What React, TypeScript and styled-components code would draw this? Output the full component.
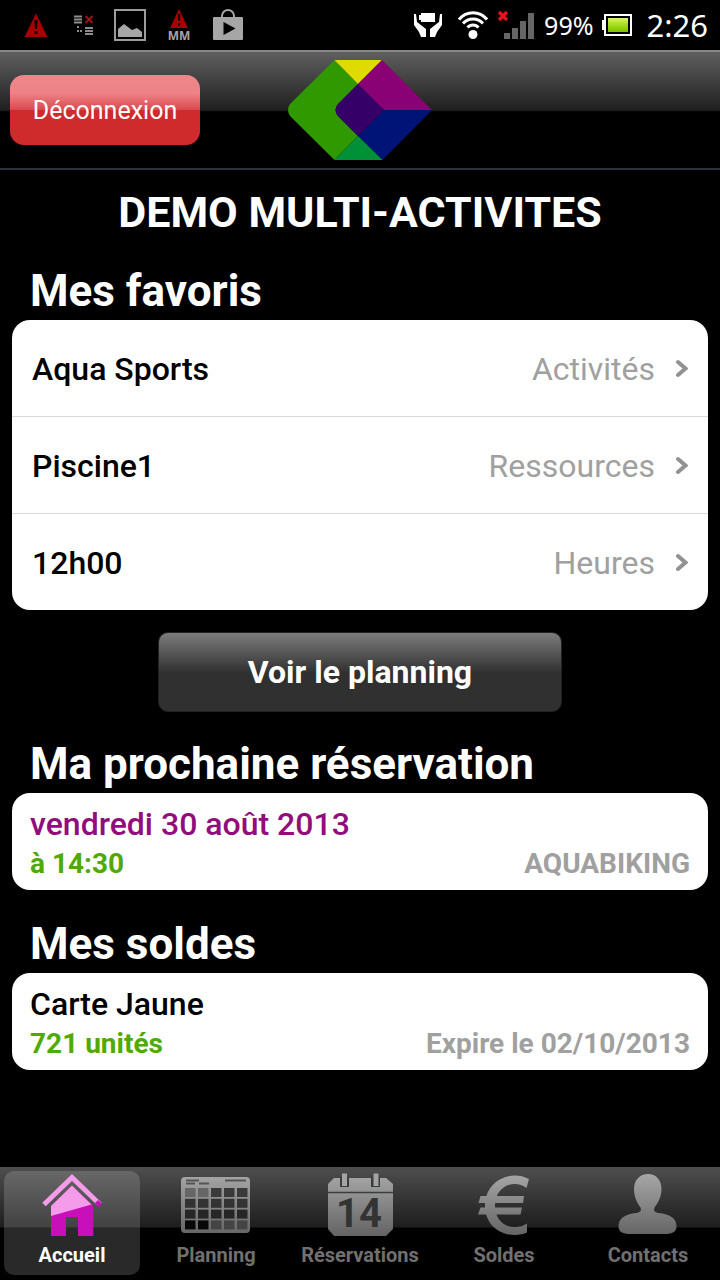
import React from "react";
import styled, { createGlobalStyle } from "styled-components";

const GlobalStyle = createGlobalStyle`
  *, *::before, *::after { box-sizing: border-box; }
  body { margin: 0; background: #000; font-family: Roboto, "Liberation Sans", sans-serif; }
  h1, h2, p, ul { margin: 0; padding: 0; }
  svg { display: block; flex: none; }
`;

const Screen = styled.div`
  display: flex;
  flex-direction: column;
  min-height: 100vh;
  background: #000;
  color: #fff;
`;

const StatusBar = styled.div`
  display: flex;
  align-items: center;
  justify-content: space-between;
  height: 50px;
  padding: 0 12px 0 24px;
  font-family: "Noto Sans", sans-serif;
`;

const StatusIcons = styled.div<{ $gap: number }>`
  display: flex;
  align-items: center;
  gap: ${(p) => p.$gap}px;
`;

const StatusText = styled.span<{ $size: number }>`
  font-size: ${(p) => p.$size}px;
  line-height: 48px;
`;

const Header = styled.header`
  display: grid;
  grid-template-columns: 1fr auto 1fr;
  align-items: center;
  height: 120px;
  padding: 0 10px;
  border-top: 2px solid #888;
  border-bottom: 2px solid #29323b;
  background: linear-gradient(#5f5f5f 0, #202020 58px, #000 60px);
`;

const LogoutButton = styled.button`
  justify-self: start;
  width: 190px;
  height: 70px;
  padding: 2px 0 0;
  border: 0;
  border-radius: 14px;
  background: linear-gradient(#f0868a 0, #ee8387 18px, #d9494d 35px, #cf2b2c 35px);
  color: #fff;
  font: 400 25px/68px Roboto, sans-serif;
`;

const Main = styled.main`
  flex: 1;
  padding: 12px 12px 24px;
`;

const Title = styled.h1`
  font-size: 43px;
  line-height: 60px;
  font-weight: 700;
  text-align: center;
`;

const Section = styled.section<{ $gap: number }>`
  margin-top: ${(p) => p.$gap}px;
`;

const SectionTitle = styled.h2`
  padding-left: 18px;
  font-size: 44px;
  line-height: 58px;
  font-weight: 700;
`;

const Card = styled.div`
  border-radius: 18px;
  background: #fff;
  color: #000;
  overflow: hidden;
`;

const FavoriteList = styled(Card).attrs({ as: "ul" })`
  list-style: none;
`;

const FavoriteItem = styled.li`
  & + & { border-top: 1px solid #d9d9d9; }
`;

const FavoriteLink = styled.a`
  display: flex;
  align-items: center;
  height: 96px;
  padding: 1px 20px 0;
  color: #000;
  font-size: 32px;
  text-decoration: none;
`;

const FavoriteName = styled.span`
  flex: 1;
  font-weight: 500;
`;

const FavoriteKind = styled.span`
  margin-right: 20px;
  color: #a0a0a0;
`;

const PlanningButton = styled.button`
  display: block;
  width: 58%;
  height: 80px;
  margin: 22px auto 0;
  padding: 0;
  border: 1px solid #222;
  border-radius: 10px;
  background: linear-gradient(#7c7c7c 0, #303030 40px, #303030 100%);
  color: #fff;
  font: 700 32px/78px Roboto, sans-serif;
`;

const InfoCard = styled(Card)`
  padding: 11px 18px 6px;
`;

const InfoTitle = styled.p<{ $color: string }>`
  color: ${(p) => p.$color};
  font-size: 32px;
  line-height: 40px;
  font-weight: 500;
`;

const InfoRow = styled.p`
  display: flex;
  justify-content: space-between;
  font-size: 28px;
  line-height: 40px;
  font-weight: 700;
`;

const Highlight = styled.span`
  color: #50aa05;
`;

const Detail = styled.span`
  color: #a0a0a0;
`;

const TabBar = styled.nav`
  display: flex;
  height: 113px;
  background: linear-gradient(#4e4e4e 0, #1e1e1e 60px, #000 61px);
`;

const Tab = styled.a<{ $active?: boolean }>`
  flex: 1;
  display: flex;
  flex-direction: column;
  align-items: center;
  min-width: 0;
  margin: 4px 4px 5px;
  padding-top: 2px;
  border-radius: 10px;
  background: ${(p) => (p.$active ? "rgba(255, 255, 255, 0.16)" : "none")};
  color: ${(p) => (p.$active ? "#fff" : "#707070")};
  font-size: 20px;
  line-height: 36px;
  font-weight: 700;
  text-decoration: none;
  white-space: nowrap;
`;

const AlertIcon = () => (
  <svg width="24" height="24" viewBox="0 0 24 24">
    <path d="M12 .5 23.5 24H.5Z" fill="#a80000" />
    <path d="M10.3 7h3.4l-.7 9h-2ZM10.5 18h3v3h-3Z" fill="#100" />
  </svg>
);

const SyncErrorIcon = () => (
  <svg width="20" height="20" viewBox="0 0 20 20">
    <path d="M0 1.500h8M0 4.500h8M0 7.500h8M11 13h8M11 16h8M11 19h8" stroke="#8c8c8c" strokeWidth="2" />
    <path d="M3 12h2M3 16h2M6 16h2" stroke="#8c8c8c" strokeWidth="2" />
    <path d="m11.500 1 7 7m0-7-7 7" stroke="#a81414" strokeWidth="1.800" />
  </svg>
);

const PictureIcon = () => (
  <svg width="32" height="32" viewBox="0 0 32 32">
    <rect x="1" y="1" width="30" height="30" fill="none" stroke="#9c9c9c" strokeWidth="2" />
    <path d="M4 28v-8l6-5 8 6 5-2 5 4v5Z" fill="#a6a6a6" />
  </svg>
);

const MmAlertIcon = () => (
  <svg width="26" height="36" viewBox="0 0 26 36">
    <path d="M13 2 22 21H4Z" fill="#a80000" />
    <path d="M11.800 7h2.600l-.6 7h-1.400ZM12 16h2.200v2.500H12Z" fill="#100" />
    <text x="13" y="33" textAnchor="middle" fontSize="12" fontWeight="700" fontFamily="Noto Sans, sans-serif" fill="#a6a6a6">MM</text>
  </svg>
);

const StoreIcon = () => (
  <svg width="32" height="32" viewBox="0 0 32 32">
    <path d="M10 9V7a6 6 0 0 1 12 0v2" fill="none" stroke="#a6a6a6" strokeWidth="2" />
    <rect x="1" y="8" width="30" height="23" rx="1" fill="#a6a6a6" />
    <path d="m11.500 13 12 6.500-12 6.500Z" fill="#000" />
  </svg>
);

const PowerIcon = () => (
  <svg width="28" height="24" viewBox="0 0 28 24">
    <path d="M7 0h14v9H7V7H5V2h2Z" fill="#fff" />
    <path d="M0 1h2l1 8 9 7v8H7l-2-5-5-7ZM28 1h-2l-1 8-9 7v8h5l2-5 5-7Z" fill="#fff" />
  </svg>
);

const WifiIcon = () => (
  <svg width="30" height="28" viewBox="0 0 30 28">
    <g fill="none" stroke="#fff" strokeWidth="3">
      <path d="M1 8.500C8.500-.5 21.500-.5 29 8.500" />
      <path d="M5 12.500c5.500-6 14.500-6 20 0" />
      <path d="M9.500 16.500c3-3.500 8-3.500 11 0" />
    </g>
    <circle cx="15" cy="23.500" r="4.500" fill="#fff" />
  </svg>
);

const SignalIcon = () => (
  <svg width="38" height="30" viewBox="0 0 38 30">
    <path d="M7 23h6v6H7ZM15 18h6v11h-6ZM23 11h6v18h-6ZM31 3h6v26h-6Z" fill="#666" />
    <path d="m2 2 8 8m0-8-8 8" stroke="#e8101c" strokeWidth="3.500" />
  </svg>
);

const BatteryIcon = () => (
  <svg width="30" height="22" viewBox="0 0 30 22">
    <defs>
      <linearGradient id="charge" x1="0" y1="0" x2="0" y2="1">
        <stop offset="0" stopColor="#d8f56b" />
        <stop offset=".5" stopColor="#a4dc1d" />
        <stop offset="1" stopColor="#7fc400" />
      </linearGradient>
    </defs>
    <rect x="3" y="1" width="26" height="20" fill="none" stroke="#fff" strokeWidth="2" />
    <path d="M0 6h2v10H0Z" fill="#fff" />
    <rect x="6" y="4" width="20" height="14" fill="url(#charge)" />
  </svg>
);

const Logo = () => (
  <svg width="144" height="100" viewBox="0 0 144 100" role="img" aria-label="Logo">
    <path d="M46.500 0 70 24 50 44q-5 6 0 12l20 20-23.500 24L2 56q-4-6 0-12Z" fill="#309900" />
    <path d="M46.500 0H94L70 24Z" fill="#dfdb00" />
    <path d="m94 0 50 50H96L70 24Z" fill="#8a0075" />
    <path d="M144 50 94.500 100 70 76l26-26Z" fill="#001478" />
    <path d="M70 76 94.500 100h-48Z" fill="#009038" />
    <path d="m70 24 26 26-26 26-20-20q-5-6 0-12Z" fill="#350068" />
  </svg>
);

const Chevron = () => (
  <svg width="13" height="20" viewBox="0 0 13 20">
    <path d="m3 3 7.500 6.500L3 16" fill="none" stroke="#929292" strokeWidth="4" strokeLinecap="round" />
  </svg>
);

const TabGradient = ({ id }: { id: string }) => (
  <linearGradient id={id} gradientUnits="userSpaceOnUse" x1="0" y1="0" x2="0" y2="64">
    <stop offset="0" stopColor="#a8a8a8" />
    <stop offset="1" stopColor="#626262" />
  </linearGradient>
);

const HomeIcon = () => (
  <svg width="72" height="64" viewBox="0 0 72 64">
    <path d="M36 12.500 57.300 33v30H42V44H30v19H15V33Z" fill="#c80fb9" />
    <path d="M36 12.500 55.500 31.500 15 43V33Z" fill="#f49bea" />
    <path d="M8 31.500 36 4.500l28 27" fill="none" stroke="#f49bea" strokeWidth="5" />
    <path d="m59 30 3-3 4 3.500-3.500 4Z" fill="#c80fb9" />
  </svg>
);

const cellShades = [
  ["#666", "#666", "#3a3a3a", "#3a3a3a", "#3a3a3a"],
  ["#333", "#333", "#333", "#333", "#333"],
  ["#262626", "#262626", "#262626", "#262626", "#262626"],
  ["#080808", "#080808", "#444", "#444", "#444"],
];

const PlanningIcon = () => (
  <svg width="72" height="64" viewBox="0 0 72 64">
    <defs><TabGradient id="planning" /></defs>
    <rect x="1" y="4" width="69" height="56" rx="4" fill="url(#planning)" />
    <path d="M6 7.500h13M6 10.500h9M19 10.500h10M45 7.500h21" stroke="#555" strokeWidth="2" />
    {cellShades.map((shades, row) =>
      shades.map((shade, col) => (
        <rect key={`${row}-${col}`} x={5 + col * 13} y={15 + row * 10.8} width="10.500" height="9" fill={shade} />
      ))
    )}
  </svg>
);

const CalendarIcon = () => (
  <svg width="72" height="64" viewBox="0 0 72 64">
    <defs><TabGradient id="calendar" /></defs>
    <path d="M10 5h52l7 6v45l-7 7H10l-6-7V11Z" fill="url(#calendar)" />
    <path d="M16 4h9v10h-9ZM47 4h9v10h-9Z" fill="#3c3c3c" />
    <path d="M18 .5h5V13h-5ZM49.500.5h5V13h-5Z" fill="#a4a4a4" />
    <path d="M4 19.500h65" stroke="#3c3c3c" strokeWidth="1.500" />
    <text x="35" y="54" textAnchor="middle" fontSize="40" fontWeight="700" fontFamily="Roboto, sans-serif" fill="#333">14</text>
  </svg>
);

const EuroIcon = () => (
  <svg width="72" height="64" viewBox="0 0 72 64">
    <defs><TabGradient id="euro" /></defs>
    <path
      fill="url(#euro)"
      d="M61 6C56 3.500 52 2.500 47 2.500c-16 0-30 12-30 30S30 62 47 62c5 0 9-1 12-2.500v-9c-4 2.500-7 3.500-12 3.500-12 0-20-8.500-20-21.500s9-21.500 20-21.500c4 0 8 1.300 11.500 4Z"
    />
    <path fill="url(#euro)" d="M12.500 23H56l-1 7H10.500ZM12.500 34.500H54L52.500 41.500H10Z" />
  </svg>
);

const ContactIcon = () => (
  <svg width="72" height="64" viewBox="0 0 72 64">
    <defs><TabGradient id="contact" /></defs>
    <path
      fill="url(#contact)"
      d="M36 1c8 0 13.500 6 13.500 15S45 31 42.500 34.500c-1 3 0 5 4 5.500 12 1 18 6 18 13 0 6-4 8-12 8h-34c-8 0-12-2-12-8 0-7 6-12 18-13 4-.5 5-2.500 4-5.500C26 31 22 25 22 16S28 1 36 1Z"
    />
  </svg>
);

const favorites = [
  { name: "Aqua Sports", kind: "Activités" },
  { name: "Piscine1", kind: "Ressources" },
  { name: "12h00", kind: "Heures" },
];

const tabs = [
  { label: "Accueil", Icon: HomeIcon, active: true },
  { label: "Planning", Icon: PlanningIcon },
  { label: "Réservations", Icon: CalendarIcon },
  { label: "Soldes", Icon: EuroIcon },
  { label: "Contacts", Icon: ContactIcon },
];

export default function App() {
  return (
    <Screen>
      <GlobalStyle />
      <StatusBar>
        <StatusIcons $gap={26}>
          <AlertIcon />
          <StatusIcons $gap={20}>
            <SyncErrorIcon />
            <PictureIcon />
            <MmAlertIcon />
            <StoreIcon />
          </StatusIcons>
        </StatusIcons>
        <StatusIcons $gap={14}>
          <StatusIcons $gap={9}>
            <StatusIcons $gap={16}>
              <PowerIcon />
              <WifiIcon />
            </StatusIcons>
            <SignalIcon />
            <StatusText $size={25}>99%</StatusText>
            <BatteryIcon />
          </StatusIcons>
          <StatusText $size={31}>2:26</StatusText>
        </StatusIcons>
      </StatusBar>
      <Header>
        <LogoutButton type="button">Déconnexion</LogoutButton>
        <Logo />
      </Header>
      <Main>
        <Title>DEMO MULTI-ACTIVITES</Title>
        <Section $gap={20}>
          <SectionTitle>Mes favoris</SectionTitle>
          <FavoriteList>
            {favorites.map(({ name, kind }) => (
              <FavoriteItem key={name}>
                <FavoriteLink href="#">
                  <FavoriteName>{name}</FavoriteName>
                  <FavoriteKind>{kind}</FavoriteKind>
                  <Chevron />
                </FavoriteLink>
              </FavoriteItem>
            ))}
          </FavoriteList>
          <PlanningButton type="button">Voir le planning</PlanningButton>
        </Section>
        <Section $gap={23}>
          <SectionTitle>Ma prochaine réservation</SectionTitle>
          <InfoCard>
            <InfoTitle $color="#920c7c">vendredi 30 août 2013</InfoTitle>
            <InfoRow>
              <Highlight>à 14:30</Highlight>
              <Detail>AQUABIKING</Detail>
            </InfoRow>
          </InfoCard>
        </Section>
        <Section $gap={25}>
          <SectionTitle>Mes soldes</SectionTitle>
          <InfoCard>
            <InfoTitle $color="#000">Carte Jaune</InfoTitle>
            <InfoRow>
              <Highlight>721 unités</Highlight>
              <Detail>Expire le 02/10/2013</Detail>
            </InfoRow>
          </InfoCard>
        </Section>
      </Main>
      <TabBar>
        {tabs.map(({ label, Icon, active }) => (
          <Tab key={label} href="#" $active={active} aria-current={active ? "page" : undefined}>
            <Icon />
            {label}
          </Tab>
        ))}
      </TabBar>
    </Screen>
  );
}
